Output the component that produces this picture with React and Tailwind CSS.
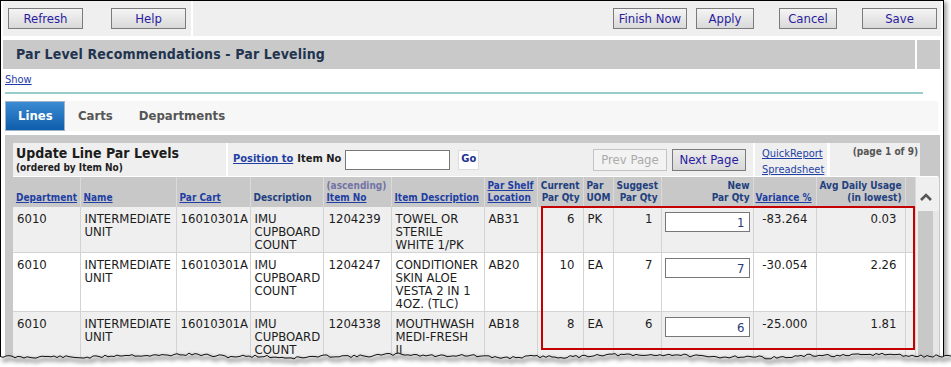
import React from 'react';

// screenshot frame of the "Par Leveling" page
const FONT = "font-['DejaVu_Sans_Condensed','DejaVu_Sans',sans-serif]";

const COLS = [
  'w-[67px]', 'w-[96px]', 'w-[74px]', 'w-[73px]', 'w-[68px]', 'w-[93px]', 'w-[53px]',
  'w-[46px]', 'w-[30px]', 'w-[48px]', 'w-[92px]', 'w-[63px]', 'w-[89px]', 'w-[10px]',
];

const ROWS = [
  {
    dept: '6010', name: ['INTERMEDIATE', 'UNIT'], cart: '16010301A', desc: ['IMU', 'CUPBOARD', 'COUNT'],
    item: '1204239', itemDesc: ['TOWEL OR', 'STERILE', 'WHITE 1/PK'], loc: 'AB31',
    cur: '6', uom: 'PK', sug: '1', newQty: '1', variance: '-83.264', avg: '0.03',
  },
  {
    dept: '6010', name: ['INTERMEDIATE', 'UNIT'], cart: '16010301A', desc: ['IMU', 'CUPBOARD', 'COUNT'],
    item: '1204247', itemDesc: ['CONDITIONER', 'SKIN ALOE', 'VESTA 2 IN 1', '4OZ. (TLC)'], loc: 'AB20',
    cur: '10', uom: 'EA', sug: '7', newQty: '7', variance: '-30.054', avg: '2.26',
  },
  {
    dept: '6010', name: ['INTERMEDIATE', 'UNIT'], cart: '16010301A', desc: ['IMU', 'CUPBOARD', 'COUNT'],
    item: '1204338', itemDesc: ['MOUTHWASH', 'MEDI-FRESH', 'II'], loc: 'AB18',
    cur: '8', uom: 'EA', sug: '6', newQty: '6', variance: '-25.000', avg: '1.81',
  },
];

// jagged "torn paper" edge along the bottom of the capture
const TORN = (() => {
  let seed = 11;
  const rnd = () => {
    seed = (seed * 9301 + 49297) % 233280;
    return seed / 233280;
  };
  const pts = [];
  for (let x = 0; x <= 951; x += 3) {
    const bump = Math.sin(x / 37) * 1.2 + Math.sin(x / 11) * 0.6;
    pts.push([x, 9 + bump + (rnd() - 0.5) * 2.6]);
  }
  return pts;
})();
const tornLine = TORN.map(([x, y], i) => `${i ? 'L' : 'M'}${x},${y.toFixed(1)}`).join(' ');
const tornFill = `${tornLine} L951,24 L0,24 Z`;

const ToolButton = ({ label, className }) => (
  <button
    className={`h-[21px] border border-[#7b7b7b] bg-linear-to-b from-[#f5f5f5] to-[#d9d9d9] text-[13px] leading-none text-[#2a1c9e] ${className}`}
  >
    {label}
  </button>
);

// multi-line cell text, kept as one text run
const Lines = ({ items }) => <div className="whitespace-pre">{items.join('\n')}</div>;

const HeadLink = ({ children }) => <span className="underline text-[#1f3fa3]">{children}</span>;

const th = 'bg-[#c8c8c8] border-r border-[#dadada] align-bottom px-[3px] pb-[3px] text-[10px] font-bold leading-[12px] text-[#22407f]';
const td = 'align-top border-r border-b border-[#d3d3d3] px-[4px] pt-[5px] pb-[1px] text-[13px] leading-[13px] text-[#1c1c1c]';

export default function App() {
  return (
    <div className={`relative w-[951px] h-[367px] overflow-hidden bg-white ${FONT}`}>
      <div className="w-[944px] h-[367px] overflow-hidden border-l border-t border-r border-black bg-white shadow-[3px_2px_4px_rgba(0,0,0,0.35)]">
        {/* Toolbar */}
        <div className="flex h-[35px] gap-[2px] px-[2px]">
          <div className="flex w-[188px] items-start gap-[28px] bg-[#efefef] pl-[5px] pt-[7px]">
            <ToolButton label="Refresh" className="w-[75px]" />
            <ToolButton label="Help" className="w-[75px]" />
          </div>
          <div className="flex flex-1 items-start justify-end bg-[#efefef] pr-[4px] pt-[7px]">
            <ToolButton label="Finish Now" className="w-[74px]" />
            <ToolButton label="Apply" className="ml-[9px] w-[58px]" />
            <ToolButton label="Cancel" className="ml-[25px] w-[58px]" />
            <ToolButton label="Save" className="ml-[25px] w-[75px]" />
          </div>
        </div>

        {/* Title bar */}
        <div className="mt-[4px] flex h-[29px] gap-[2px] px-[2px]">
          <div className="flex w-[912px] items-center bg-[#c8c9c8] pl-[13px] text-[14px] font-bold tracking-[0.15px] text-[#22344f]">
            Par Level Recommendations - Par Leveling
          </div>
          <div className="w-[23px] bg-[#c8c9c8]" />
        </div>

        <div className="h-[23px] pl-[4px] pt-[4px] text-[11px] leading-[13px]">
          <span className="underline text-[#1f3caa]">Show</span>
        </div>
        <div className="ml-[4px] h-[2px] w-[918px] bg-[#99cccc]" />

        {/* Tabs */}
        <div className="ml-[4px] mt-[7px] flex h-[30px] w-[933px] items-center bg-[#f7f7f7] text-[13px] font-bold">
          <div className="flex h-[30px] w-[60px] items-center border border-[#9fb4c8] bg-linear-to-b from-[#3a8bd3] to-[#0c5dab] pl-[12px] text-white">
            Lines
          </div>
          <div className="ml-[13px] text-[#555555]">Carts</div>
          <div className="ml-[26px] text-[#555555]">Departments</div>
        </div>

        {/* Panel */}
        <div className="ml-[4px] mt-[4px] w-[935px] bg-[#c8c8c8] pl-[8px] pr-[2px] pt-[8px]">
          <div className="flex h-[33px] w-[907px] gap-[2px] bg-white">
            <div className="w-[213px] bg-[#efefef] pl-[3px] pt-[2px] font-bold text-[#1c1c1c]">
              <div className="text-[14px] leading-[17px]">Update Line Par Levels</div>
              <div className="text-[10px] leading-[12px]">(ordered by Item No)</div>
            </div>
            <div className="flex w-[525px] items-center bg-[#efefef] pl-[5px] pr-[7px] text-[11px] font-bold">
              <span className="underline text-[#1f3fa3]">Position to</span>
              <span className="ml-[4px] text-[#1c1c1c]">Item No</span>
              <div className="ml-[4px] h-[20px] w-[105px] border border-[#777777] bg-white" />
              <div className="ml-[8px] flex h-[20px] w-[21px] items-center justify-center border border-[#dddddd] bg-white text-[#22308f]">
                Go
              </div>
              <div className="ml-auto flex gap-[5px] text-[13px] font-normal">
                <div className="flex h-[22px] w-[74px] items-center justify-center border border-[#c4c4c4] bg-[#f3f3f3] text-[#ababab]">
                  Prev Page
                </div>
                <div className="flex h-[22px] w-[74px] items-center justify-center border border-[#7b7b7b] bg-linear-to-b from-[#ececec] to-[#d8d8d8] text-[#2a1c9e]">
                  Next Page
                </div>
              </div>
            </div>
            <div className="w-[72px] bg-[#efefef] pl-[7px] pt-[3px] text-[11px] leading-[16px] text-[#1f3fa3]">
              <div className="underline">QuickReport</div>
              <div className="underline">Spreadsheet</div>
            </div>
            <div className="ml-[1px] w-[90px] bg-[#efefef] pr-[2px] pt-[3px] text-right text-[10px] font-bold leading-[12px] text-[#555555]">
              (page 1 of 9)
            </div>
          </div>

          <div className="flex border-t border-white">
            <table className="w-[902px] table-fixed border-collapse">
              <colgroup>
                {COLS.map((c, i) => <col key={i} className={c} />)}
              </colgroup>
              <thead>
                <tr className="h-[30px]">
                  <th className={`${th} text-left`}><HeadLink>Department</HeadLink></th>
                  <th className={`${th} text-left`}><HeadLink>Name</HeadLink></th>
                  <th className={`${th} text-left`}><HeadLink>Par Cart</HeadLink></th>
                  <th className={`${th} text-left`}>Description</th>
                  <th className={`${th} text-left`}>
                    <div className="text-[#7373a6]">(ascending)</div>
                    <HeadLink>Item No</HeadLink>
                  </th>
                  <th className={`${th} text-left`}><HeadLink>Item Description</HeadLink></th>
                  <th className={`${th} text-left`}>
                    <div><HeadLink>Par Shelf</HeadLink></div>
                    <HeadLink>Location</HeadLink>
                  </th>
                  <th className={`${th} text-right`}><div>Current</div>Par Qty</th>
                  <th className={`${th} text-left`}><div>Par</div>UOM</th>
                  <th className={`${th} text-right`}><div>Suggest</div>Par Qty</th>
                  <th className={`${th} text-right`}><div>New</div>Par Qty</th>
                  <th className={`${th} whitespace-nowrap !px-[2px] text-left`}><HeadLink>Variance %</HeadLink></th>
                  <th className={`${th} text-right`}><div>Avg Daily Usage</div>(in lowest)</th>
                  <th className={th} />
                </tr>
              </thead>
              <tbody>
                {ROWS.map((r, i) => (
                  <tr key={r.item} className={i % 2 === 0 ? 'bg-[#efefef]' : 'bg-white'}>
                    <td className={td}>{r.dept}</td>
                    <td className={td}><Lines items={r.name} /></td>
                    <td className={td}>{r.cart}</td>
                    <td className={td}><Lines items={r.desc} /></td>
                    <td className={`${td} pl-[5px]`}>{r.item}</td>
                    <td className={td}><Lines items={r.itemDesc} /></td>
                    <td className={td}>{r.loc}</td>
                    <td className={`${td} pr-[8px] text-right`}>{r.cur}</td>
                    <td className={td}>{r.uom}</td>
                    <td className={`${td} pr-[8px] text-right`}>{r.sug}</td>
                    <td className={`${td} pt-[4px]`}>
                      <div className="ml-[-1px] h-[20px] w-[85px] border border-[#777777] bg-white pr-[4px] pt-[3px] text-right text-[#283a78]">
                        {r.newQty}
                      </div>
                    </td>
                    <td className={`${td} pr-[8px] text-right`}>{r.variance}</td>
                    <td className={`${td} pr-[8px] text-right`}>{r.avg}</td>
                    <td className={td} />
                  </tr>
                ))}
              </tbody>
            </table>

            {/* scrollbar */}
            <div className="flex w-[23px] flex-col">
              <div className="flex h-[30px] items-end bg-[#efefef] pb-[5px] pl-[3px]">
                <svg width="14" height="10" viewBox="0 0 14 10">
                  <polyline points="2,8 7,3 12,8" fill="none" stroke="#555555" strokeWidth="2.6" />
                </svg>
              </div>
              <div className="flex flex-1 bg-[#efefef] pt-[4px]">
                <div className="ml-[2px] w-[15px] bg-[#c8c8c8]" />
                <div className="w-[6px] bg-[#e6e6e6]" />
              </div>
            </div>
          </div>
        </div>
      </div>

      {/* annotation box */}
      <div className="absolute left-[541px] top-[206px] h-[144px] w-[374px] border-2 border-[#c40000]" />

      {/* torn bottom edge */}
      <svg className="absolute left-0 top-[347px]" width="951" height="20" viewBox="0 0 951 20">
        <defs>
          <filter id="tornShadow" x="-5%" y="-100%" width="110%" height="300%">
            <feGaussianBlur stdDeviation="2" />
          </filter>
        </defs>
        <path d={tornFill} fill="#ffffff" />
        <path d={tornLine} transform="translate(2,3)" fill="none" stroke="#8a8a8a" strokeWidth="3" filter="url(#tornShadow)" />
        <path d={tornLine} fill="none" stroke="#111111" strokeWidth="1" />
      </svg>
    </div>
  );
}
